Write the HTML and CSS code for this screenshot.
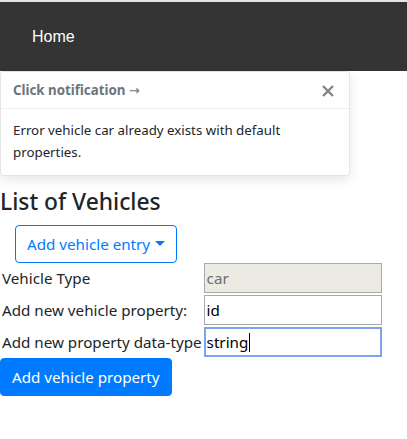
FILE: index.html
```
<!DOCTYPE html>
<html>
<head>
<meta charset="utf-8">
<link rel="stylesheet" href="styles.css">
</head>
<body>
<div class="topline"></div>
<nav class="navbar"><span class="nav-link">Home</span></nav>
<div class="toast">
  <div class="toast-header">
    <strong class="toast-title">Click notification <span class="arrow">→</span></strong>
    <svg class="close" width="12" height="12" viewBox="0 0 12 12"><path d="M1 1 L11 11 M11 1 L1 11" stroke="#808080" stroke-width="2.2" fill="none"/></svg>
  </div>
  <div class="toast-body">Error vehicle car already exists with default properties.</div>
</div>
<h4 class="title">List of Vehicles</h4>
<button class="btn btn-outline">Add vehicle entry<span class="caret"></span></button>
<div class="form">
  <label class="lbl">Vehicle Type</label>
  <input class="inp disabled" value="car" disabled>
  <label class="lbl">Add new vehicle property:</label>
  <input class="inp" value="id">
  <label class="lbl">Add new property data-type</label>
  <div class="inp focus">string<span class="cursor"></span></div>
</div>
<button class="btn btn-primary">Add vehicle property</button>
</body>
</html>
```
FILE: styles.css
```
* { box-sizing: border-box; }
body {
  margin: 0;
  font-family: "Noto Sans", "Open Sans", sans-serif;
  font-size: 15.2px;
  line-height: 1.5;
  color: #212529;
  background: #fff;
}
.topline { height: 2px; background: #e4e4e4; }
.navbar {
  height: 69px;
  background: #343434;
  display: flex;
  align-items: center;
  padding-left: 32px;
}
.nav-link {
  font-family: "Liberation Sans", Arial, sans-serif;
  color: #fff;
  font-size: 16px;
}
.toast {
  width: 350px;
  font-size: 13.3px;
  background: rgba(255,255,255,.85);
  border: 1px solid rgba(0,0,0,.1);
  border-radius: 4px;
  box-shadow: 0 4px 12px rgba(0,0,0,.1);
  margin-bottom: 12px;
}
.toast-header {
  display: flex;
  align-items: center;
  justify-content: space-between;
  height: 37px;
  padding: 4px 15px 2px 12px;
  color: #6c757d;
  border-bottom: 1px solid rgba(0,0,0,.06);
}
.toast-title { font-weight: 700; font-size: 13.3px; }
.arrow { font-family: "DejaVu Sans", sans-serif; font-weight: 400; font-size: 13px; }
.close { display: block; }
.toast-body { padding: 11px 12px 12px; line-height: 21.5px; }
.title {
  margin: 0 0 10px 0;
  font-size: 22.8px;
  font-weight: 500;
  line-height: 1.2;
}
.btn {
  font-family: inherit;
  font-size: 15.2px;
  line-height: 24px;
  padding: 6px 11px;
  border-radius: 4px;
  border: 1px solid transparent;
  display: inline-flex;
  align-items: center;
}
.btn-outline {
  margin-left: 15px;
  color: #007bff;
  border-color: #007bff;
  background: #fff;
}
.caret {
  display: inline-block;
  margin-left: 5px;
  border-top: 5px solid #007bff;
  border-left: 5px solid transparent;
  border-right: 5px solid transparent;
  margin-top: -2px;
}
.form {
  display: grid;
  grid-template-columns: auto 178px;
  column-gap: 2px;
  justify-content: start;
  row-gap: 2px;
  margin-top: 0;
  margin-bottom: 1px;
}
.lbl {
  display: flex;
  align-items: center;
  padding-left: 2px;
  white-space: nowrap;
}
.inp {
  height: 30px;
  width: 178px;
  font-family: inherit;
  font-size: 15.2px;
  color: #000;
  border: 1px solid #a9a9a9;
  background: #fff;
  padding: 0 2px;
  margin: 0;
  display: flex;
  align-items: center;
}
.inp.disabled { background: #ebebe4; color: #6d6d6d; }
.inp.focus { border: 2px solid #7ea4f0; padding: 0 1px; }
.cursor { display: inline-block; width: 1px; height: 19px; background: #000; margin-left: 1px; }
.btn-primary {
  color: #fff;
  background: #007bff;
  border-color: #007bff;
}
```
